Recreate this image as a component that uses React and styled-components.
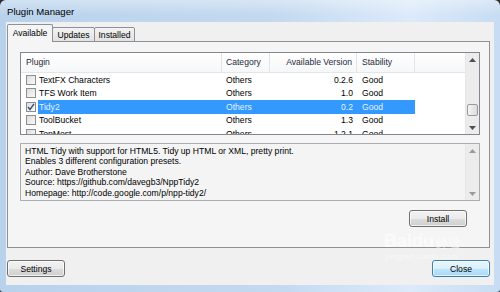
import React from "react";
import styled, { createGlobalStyle } from "styled-components";

const GlobalStyle = createGlobalStyle`
  html, body {
    margin: 0;
    padding: 0;
    background: #2e2e2e;
  }
  body {
    font-family: "Liberation Sans", Arial, sans-serif;
    font-size: 8.6px;
    color: #000;
  }
`;

const Window = styled.div`
  position: relative;
  width: 500px;
  height: 292px;
  display: flex;
  flex-direction: column;
  background: linear-gradient(to right, #b9d2ec 0%, #c3d9f0 55%, #dceafa 82%, #c7dcf2 100%);
  border-radius: 6px 6px 3px 3px;
  overflow: hidden;
`;

const TitleBar = styled.div`
  height: 22px;
  display: flex;
  align-items: center;
  padding-left: 7px;
  font-size: 9.6px;
  color: #000;
  background: linear-gradient(to bottom, rgba(255, 255, 255, 0.35), rgba(255, 255, 255, 0) 70%);
`;

const Frame = styled.div`
  flex: 1;
  display: flex;
  padding: 0 6px 7px 6px;
`;

const Client = styled.div`
  flex: 1;
  display: flex;
  flex-direction: column;
  background: #f0f0f0;
  padding: 3px 4px 7px 1px;
`;

const TabRow = styled.div`
  height: 17px;
  display: flex;
  align-items: flex-end;
  margin-bottom: -1px;
  position: relative;
  z-index: 1;
`;

const Tab = styled.div`
  box-sizing: border-box;
  width: ${(p) => p.$width}px;
  height: ${(p) => (p.$active ? 18 : 15)}px;
  margin-left: ${(p) => (p.$first ? 0 : -1)}px;
  display: flex;
  align-items: center;
  justify-content: center;
  border: 1px solid #8d9097;
  border-bottom: ${(p) => (p.$active ? "none" : "1px solid #8d9097")};
  border-radius: 2px 2px 0 0;
  background: ${(p) =>
    p.$active ? "#f5f5f5" : "linear-gradient(to bottom, #f3f3f3, #e2e2e2)"};
  padding-bottom: ${(p) => (p.$active ? 1 : 0)}px;
  z-index: ${(p) => (p.$active ? 2 : 1)};
`;

const Panel = styled.div`
  box-sizing: border-box;
  height: 207px;
  border: 1px solid #8d9097;
  background: #f5f5f5;
  padding: 10px 9px 0 12px;
  display: flex;
  flex-direction: column;
`;

const ListBox = styled.div`
  box-sizing: border-box;
  height: 83px;
  border: 1px solid #828790;
  background: #fff;
  display: flex;
`;

const ListMain = styled.div`
  flex: 1;
  overflow: hidden;
  display: flex;
  flex-direction: column;
`;

const Header = styled.div`
  height: 20px;
  flex-shrink: 0;
  display: grid;
  grid-template-columns: 201px 48px 87px 58px 1fr;
  background: linear-gradient(to bottom, #ffffff, #f6f7f8);
  border-bottom: 1px solid #e5e5e5;
  box-sizing: border-box;
`;

const HeadCell = styled.div`
  display: flex;
  align-items: center;
  justify-content: ${(p) => (p.$right ? "flex-end" : "flex-start")};
  padding: 0 ${(p) => (p.$right ? 4 : 0)}px 1px ${(p) => p.$pad || 4}px;
  border-right: ${(p) => (p.$last ? "none" : "1px solid #e3e4e6")};
  color: #1f2a3a;
  white-space: nowrap;
`;

const Row = styled.div`
  height: 13.5px;
  flex-shrink: 0;
  display: grid;
  grid-template-columns: 17px 184px 48px 87px 58px 1fr;
  align-items: stretch;
`;

const CheckCell = styled.div`
  display: flex;
  align-items: center;
  padding-left: 5px;
`;

const Cell = styled.div`
  display: flex;
  align-items: center;
  justify-content: ${(p) => (p.$right ? "flex-end" : "flex-start")};
  padding: 0 ${(p) => (p.$right ? 4 : 0)}px 0 ${(p) => p.$pad ?? 4}px;
  white-space: nowrap;
  background: ${(p) => (p.$selected ? "#3399ff" : "transparent")};
  color: ${(p) => (p.$selected ? "#e4f2ff" : "#000")};
`;

const Box = styled.div`
  box-sizing: border-box;
  width: 10px;
  height: 10px;
  border: 1px solid #8e8f8f;
  background: linear-gradient(135deg, #dcdcdc, #fafafa);
  display: flex;
  align-items: center;
  justify-content: center;
`;

const ScrollBar = styled.div`
  width: 13px;
  flex-shrink: 0;
  display: flex;
  flex-direction: column;
  background: #ececec;
  border-left: 1px solid #e6e6e6;
`;

const ScrollButton = styled.div`
  height: 13px;
  flex-shrink: 0;
  display: flex;
  align-items: center;
  justify-content: center;
`;

const Track = styled.div`
  flex: 1;
`;

const Thumb = styled.div`
  box-sizing: border-box;
  height: 12px;
  margin: 0 1px;
  border: 1px solid #9a9a9a;
  border-radius: 2px;
  background: linear-gradient(to right, #f4f4f4, #dcdcdc);
`;

const DescBox = styled.div`
  box-sizing: border-box;
  height: 58px;
  margin-top: 8px;
  border: 1px solid #abadb3;
  background: #f4f4f4;
  display: flex;
`;

const DescText = styled.div`
  flex: 1;
  padding: 2px 4px;
  line-height: 10.4px;
  white-space: nowrap;
  overflow: hidden;
`;

const InstallRow = styled.div`
  display: flex;
  justify-content: flex-end;
  margin-top: 9px;
  padding-right: 13px;
`;

const Button = styled.div`
  box-sizing: border-box;
  width: 58px;
  height: 17px;
  display: flex;
  align-items: center;
  justify-content: center;
  border: 1px solid ${(p) => (p.$default ? "#3c7fb1" : "#707070")};
  border-radius: 3px;
  background: ${(p) =>
    p.$default
      ? "linear-gradient(to bottom, #eaf6fd 0%, #d9f0fc 50%, #bee6fd 51%, #a7d9f5 100%)"
      : "linear-gradient(to bottom, #f2f2f2 0%, #ebebeb 50%, #dddddd 51%, #cfcfcf 100%)"};
  box-shadow: inset 0 0 0 1px rgba(255, 255, 255, 0.7);
`;

const Footer = styled.div`
  flex: 1;
  display: flex;
  justify-content: space-between;
  align-items: flex-start;
  padding-top: 12px;
`;

const Watermark = styled.div`
  position: absolute;
  left: 384px;
  top: 232px;
  color: rgba(255, 255, 255, 0.62);
  pointer-events: none;
  display: flex;
  flex-direction: column;
  align-items: center;
`;

const MarkLine = styled.div`
  display: flex;
  align-items: flex-end;
  gap: 2px;
`;

const MarkBig = styled.span`
  font-family: "Liberation Sans", Arial, sans-serif;
  font-size: 18px;
  font-weight: bold;
  line-height: 18px;
`;

const MarkCjk = styled.span`
  font-family: "Noto Sans CJK SC", sans-serif;
  font-size: 12px;
  line-height: 14px;
`;

const MarkSmall = styled.span`
  font-size: 8px;
  margin-top: 2px;
  letter-spacing: 0.5px;
`;

const plugins = [
  { name: "TextFX Characters", cat: "Others", ver: "0.2.6", stab: "Good" },
  { name: "TFS Work Item", cat: "Others", ver: "1.0", stab: "Good" },
  { name: "Tidy2", cat: "Others", ver: "0.2", stab: "Good", checked: true, selected: true },
  { name: "ToolBucket", cat: "Others", ver: "1.3", stab: "Good" },
  { name: "TopMost", cat: "Others", ver: "1.2.1", stab: "Good" },
];

const description = [
  "HTML Tidy with support for HTML5. Tidy up HTML or XML, pretty print.",
  "Enables 3 different configuration presets.",
  "Author: Dave Brotherstone",
  "Source: https://github.com/davegb3/NppTidy2",
  "Homepage: http://code.google.com/p/npp-tidy2/",
];

function Arrow({ up, color = "#505050" }) {
  return (
    <svg width="7" height="4" viewBox="0 0 7 4">
      <path d={up ? "M0 4 L3.5 0 L7 4 Z" : "M0 0 L3.5 4 L7 0 Z"} fill={color} />
    </svg>
  );
}

function Check() {
  return (
    <svg width="8" height="8" viewBox="0 0 8 8">
      <path d="M1 4 L3 6.5 L7 0.8" fill="none" stroke="#3b4f7a" strokeWidth="1.4" />
    </svg>
  );
}

function PluginList() {
  return (
    <ListBox>
      <ListMain>
        <Header>
          <HeadCell $pad={5}>Plugin</HeadCell>
          <HeadCell>Category</HeadCell>
          <HeadCell $right>Available Version</HeadCell>
          <HeadCell $pad={5}>Stability</HeadCell>
          <HeadCell $last />
        </Header>
        {plugins.map((p) => (
          <Row key={p.name}>
            <CheckCell>
              <Box>{p.checked && <Check />}</Box>
            </CheckCell>
            <Cell $selected={p.selected} $pad={1}>
              {p.name}
            </Cell>
            <Cell $selected={p.selected}>{p.cat}</Cell>
            <Cell $selected={p.selected} $right>
              {p.ver}
            </Cell>
            <Cell $selected={p.selected} $pad={5}>
              {p.stab}
            </Cell>
            <Cell />
          </Row>
        ))}
      </ListMain>
      <ScrollBar>
        <ScrollButton>
          <Arrow up />
        </ScrollButton>
        <Track>
          <Thumb style={{ marginTop: 38 }} />
        </Track>
        <ScrollButton>
          <Arrow />
        </ScrollButton>
      </ScrollBar>
    </ListBox>
  );
}

export default function App() {
  return (
    <>
      <GlobalStyle />
      <Window>
        <TitleBar>Plugin Manager</TitleBar>
        <Frame>
          <Client>
            <TabRow>
              <Tab $active $first $width={46}>
                Available
              </Tab>
              <Tab $width={43}>Updates</Tab>
              <Tab $width={41}>Installed</Tab>
            </TabRow>
            <Panel>
              <PluginList />
              <DescBox>
                <DescText>
                  {description.map((line) => (
                    <div key={line}>{line}</div>
                  ))}
                </DescText>
                <ScrollBar>
                  <ScrollButton>
                    <Arrow up color="#9a9a9a" />
                  </ScrollButton>
                  <Track />
                  <ScrollButton>
                    <Arrow color="#9a9a9a" />
                  </ScrollButton>
                </ScrollBar>
              </DescBox>
              <InstallRow>
                <Button>Install</Button>
              </InstallRow>
            </Panel>
            <Footer>
              <Button>Settings</Button>
              <Button $default>Close</Button>
            </Footer>
          </Client>
        </Frame>
        <Watermark>
          <MarkLine>
            <MarkBig>Baidu</MarkBig>
            <MarkCjk>经验</MarkCjk>
          </MarkLine>
          <MarkSmall>jingyan.baidu.com</MarkSmall>
        </Watermark>
      </Window>
    </>
  );
}
